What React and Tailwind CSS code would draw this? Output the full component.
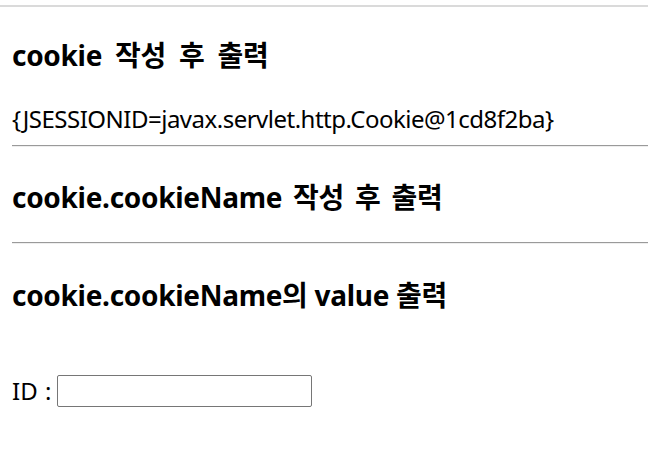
import React from 'react'

const font = { fontFamily: '"Noto Sans", "Noto Sans CJK KR", sans-serif' }

const Heading = ({ children, className = '' }) => (
  <h3 className={`text-[28px] font-bold leading-[36px] tracking-[-0.3px] text-black ${className}`}>{children}</h3>
)

const Rule = ({ className = '' }) => (
  <div className={`h-[2px] border-t border-t-[#9a9a9a] border-b border-b-[#eeeeee] ${className}`}></div>
)

export default function App() {
  return (
    <div className="min-h-screen bg-white text-[24px] text-black" style={font}>
      <div className="pt-[5px]">
        <div className="h-[2px] bg-[#dadada]"></div>
      </div>
      <div className="pl-[12px]">
        <Heading className="mt-[30px] [word-spacing:6px]">cookie 작성 후 출력</Heading>
        <div className="mt-[31px] leading-[30px] tracking-[-0.5px]">{'{JSESSIONID=javax.servlet.http.Cookie@1cd8f2ba}'}</div>
        <Rule className="mt-[11px]" />
        <Heading className="mt-[32px] [word-spacing:4px]">cookie.cookieName 작성 후 출력</Heading>
        <Rule className="mt-[27px]" />
        <Heading className="mt-[33px]">cookie.cookieName의 value 출력</Heading>
        <form className="mt-[62px] flex items-center gap-[6px] leading-[30px]">
          <label className="[word-spacing:1px]">ID :</label>
          <input type="text" className="h-[32px] w-[255px] rounded-[2px] border border-[#767676] bg-white px-1 text-[20px] outline-none" />
        </form>
      </div>
    </div>
  )
}
